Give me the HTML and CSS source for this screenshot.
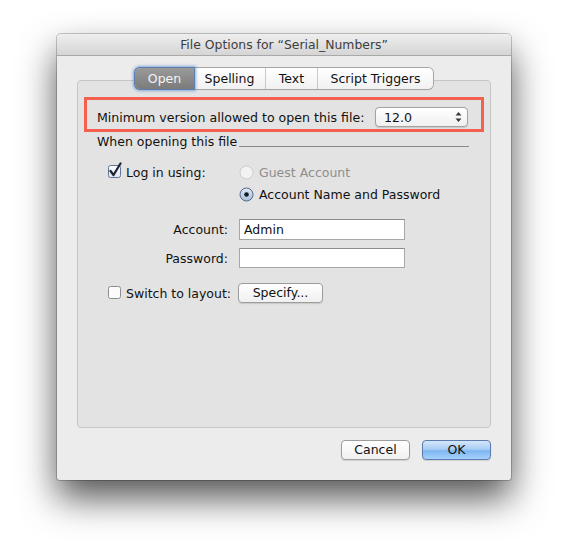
FILE: index.html
```html
<!DOCTYPE html>
<html>
<head>
<meta charset="utf-8">
<link rel="stylesheet" href="styles.css">
</head>
<body>
<div class="window">
  <div class="titlebar">File Options for “Serial_Numbers”</div>
  <div class="content">
    <div class="tabs">
      <div class="tab sel t-open">Open</div>
      <div class="tab t-spell">Spelling</div>
      <div class="tab t-text">Text</div>
      <div class="tab t-script">Script Triggers</div>
    </div>
    <div class="pane">
      <div class="highlight">
        <span>Minimum version allowed to open this file:</span>
        <div class="popup">
          <span>12.0</span>
          <svg class="arrows" width="7" height="12" viewBox="0 0 7 12"><path d="M3.5 1 L6.5 4.5 L0.5 4.5 Z M3.5 11 L6.5 7.5 L0.5 7.5 Z" fill="#3a3a3a"/></svg>
        </div>
      </div>
      <div class="group-title"><span>When opening this file</span><div class="rule"></div></div>
      <div class="form">
        <div class="row r1">
          <div class="left">
            <svg class="cb" width="16" height="17" viewBox="0 0 16 17">
              <defs><linearGradient id="cbg" x1="0" y1="0" x2="0" y2="1"><stop offset="0" stop-color="#ffffff"/><stop offset="1" stop-color="#dfe6ef"/></linearGradient></defs>
              <rect x="1.5" y="3.5" width="12" height="12" rx="2" fill="url(#cbg)" stroke="#5f7597"/>
              <path d="M3.5 9 L6.5 13 L13.5 1.5" fill="none" stroke="#1c2430" stroke-width="2.2" stroke-linecap="round" stroke-linejoin="round"/>
            </svg>
            <span class="lbl">Log in using:</span>
          </div>
          <div class="radio-line disabled">
            <svg width="15" height="15" viewBox="0 0 15 15"><circle cx="7.5" cy="7.5" r="6.5" fill="#f2f2f2" stroke="#cdcdcd"/></svg>
            <span>Guest Account</span>
          </div>
        </div>
        <div class="row r2">
          <div class="left"></div>
          <div class="radio-line">
            <svg width="15" height="15" viewBox="0 0 15 15">
              <defs><linearGradient id="rg" x1="0" y1="0" x2="0" y2="1"><stop offset="0" stop-color="#dfe8f4"/><stop offset="1" stop-color="#a9bfdc"/></linearGradient></defs>
              <circle cx="7.5" cy="7.5" r="6.5" fill="url(#rg)" stroke="#56688a"/>
              <circle cx="7.5" cy="7.5" r="2.3" fill="#101820"/>
            </svg>
            <span>Account Name and Password</span>
          </div>
        </div>
        <div class="row r3">
          <div class="left right">Account:</div>
          <div class="field">Admin</div>
        </div>
        <div class="row r4">
          <div class="left right">Password:</div>
          <div class="field"></div>
        </div>
        <div class="row r5">
          <div class="left">
            <svg class="cb" width="16" height="17" viewBox="0 0 16 17">
              <rect x="1.5" y="3.5" width="12" height="12" rx="2" fill="#fbfbfb" stroke="#8d8d8d"/>
            </svg>
            <span class="lbl">Switch to layout:</span>
          </div>
          <div class="btn specify">Specify...</div>
        </div>
      </div>
    </div>
    <div class="buttons">
      <div class="btn push">Cancel</div>
      <div class="btn push ok">OK</div>
    </div>
  </div>
</div>
</body>
</html>
```
FILE: styles.css
```css
html, body {
  margin: 0;
  padding: 0;
  background: #ffffff;
}
body {
  font-family: "DejaVu Sans", "Liberation Sans", sans-serif;
  font-size: 12px;
  color: #111;
  width: 568px;
  height: 559px;
  overflow: hidden;
}
.window {
  margin: 34px 0 0 57px;
  width: 454px;
  height: 446px;
  border-radius: 4px 4px 3px 3px;
  background: #ececec;
  box-shadow: 0 0 0 1px rgba(0,0,0,0.2), 0 18px 36px rgba(0,0,0,0.68);
  display: flex;
  flex-direction: column;
  overflow: hidden;
}
.titlebar {
  height: 21px;
  line-height: 22px;
  text-align: center;
  color: #3e3e3e;
  font-size: 12.4px;
  background: linear-gradient(#eeeeee, #d5d5d5);
  border-bottom: 1px solid #a9a9a9;
  flex: none;
}
.content {
  flex: 1;
  display: flex;
  flex-direction: column;
}
.tabs {
  margin: 12px auto -9px;
  display: flex;
  height: 21px;
  position: relative;
  z-index: 2;
  border-radius: 5px;
  box-shadow: 0 0 0 1px #a4a4a4, 0 1px 1px rgba(0,0,0,0.15);
  background: linear-gradient(#ffffff, #f1f1f1);
}
.tab {
  box-sizing: border-box;
  height: 21px;
  line-height: 21px;
  text-align: center;
  font-size: 12.5px;
  color: #111;
  border-left: 1px solid #c9c9c9;
}
.t-open { width: 59px; border-left: none; }
.t-spell { width: 71px; border-left: none; }
.t-text { width: 52px; }
.t-script { width: 116px; }
.tab.sel {
  color: #f4f4f4;
  border-radius: 5px 0 0 5px;
  background: linear-gradient(#9a9a9a, #7b7b7b);
  box-shadow: 0 0 0 1px #5d7fae, 0 0 3px 2px rgba(99,150,215,0.75);
  position: relative;
}
.pane {
  margin: 0 20px 0 20px;
  height: 348px;
  box-sizing: border-box;
  background: #e3e3e3;
  border: 1px solid #c6c6c6;
  border-radius: 4px;
  display: flex;
  flex-direction: column;
}
.highlight {
  margin: 16px 6px 0 6px;
  height: 35px;
  box-sizing: border-box;
  border: 3px solid #f4604e;
  padding: 7px 13px 2px 10px;
  display: flex;
  align-items: center;
  justify-content: space-between;
  font-size: 12.6px;
}
.popup {
  box-sizing: border-box;
  width: 93px;
  height: 20px;
  border: 1px solid #a2a2a2;
  border-radius: 4px;
  background: linear-gradient(#ffffff, #f0f0f0);
  box-shadow: 0 1px 1px rgba(0,0,0,0.12);
  display: flex;
  align-items: center;
  justify-content: space-between;
  padding: 0 5px 0 8px;
}
.group-title {
  margin: 2px 21px 0 19px;
  display: flex;
  align-items: flex-end;
  height: 15px;
  font-size: 12.5px;
  line-height: 15px;
}
.rule {
  flex: 1;
  border-top: 1px solid #8a8a8a;
  margin: 0 0 2px 2px;
}
.form {
  display: flex;
  flex-direction: column;
  padding-left: 29px;
  font-size: 12.5px;
}
.row {
  display: flex;
  align-items: center;
  white-space: nowrap;
}
.left {
  width: 121px;
  flex: none;
  margin-right: 11px;
  display: flex;
  align-items: center;
}
.left.right {
  justify-content: flex-end;
}
.cb {
  margin-top: -3px;
  margin-right: 3px;
  flex: none;
}
.r1 { margin-top: 13px; height: 20px; }
.r2 { margin-top: 2px; height: 20px; }
.r3 { margin-top: 15px; height: 21px; }
.r4 { margin-top: 8px; height: 20px; }
.r5 { margin-top: 15px; height: 20px; }
.radio-line {
  display: flex;
  align-items: center;
  gap: 5px;
}
.radio-line.disabled { color: #8e8e8e; }
.field {
  box-sizing: border-box;
  width: 166px;
  height: 100%;
  background: #ffffff;
  border: 1px solid #a7a7a7;
  border-top-color: #8c8c8c;
  padding-left: 4px;
  line-height: 19px;
}
.btn {
  box-sizing: border-box;
  height: 20px;
  line-height: 18px;
  text-align: center;
  border: 1px solid #9d9d9d;
  border-radius: 4px;
  background: linear-gradient(#ffffff, #f0f0f0);
  box-shadow: 0 1px 1px rgba(0,0,0,0.12);
}
.specify {
  width: 85px;
  margin-left: -1px;
}
.buttons {
  margin-top: 12px;
  display: flex;
  justify-content: flex-end;
  gap: 12px;
  padding-right: 20px;
  font-size: 12.5px;
}
.push { width: 69px; }
.ok {
  border-color: #5a7bb0;
  background: linear-gradient(#d5e7fb 0%, #a9cdf5 45%, #7fb6f1 55%, #a6d2fb 100%);
}
```
